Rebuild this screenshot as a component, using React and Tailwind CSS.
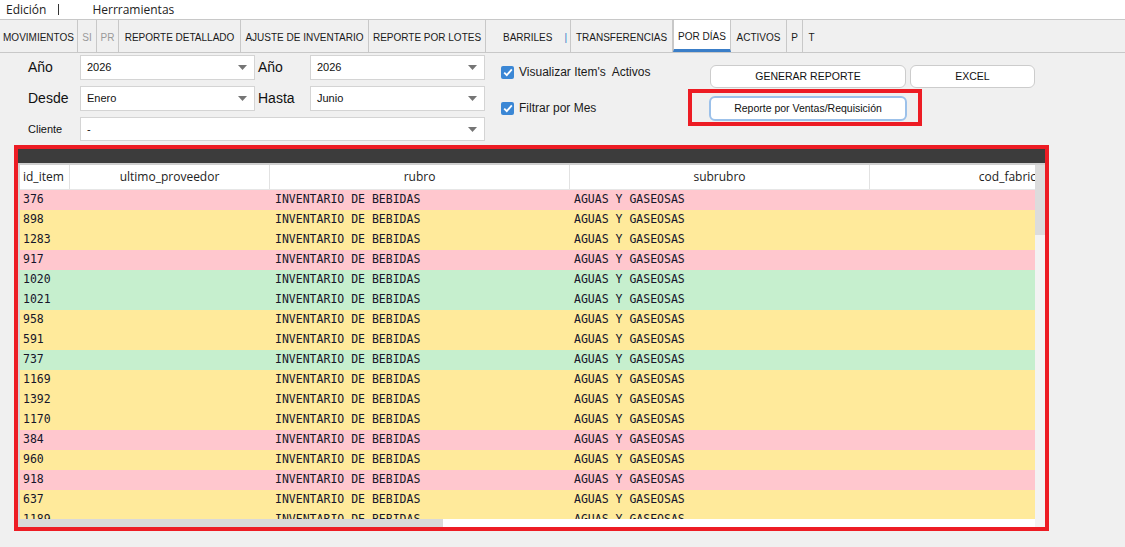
const rows = [
  { id: "376", c: "bg-[#ffc7ce]" },
  { id: "898", c: "bg-[#ffea9b]" },
  { id: "1283", c: "bg-[#ffea9b]" },
  { id: "917", c: "bg-[#ffc7ce]" },
  { id: "1020", c: "bg-[#c6efce]" },
  { id: "1021", c: "bg-[#c6efce]" },
  { id: "958", c: "bg-[#ffea9b]" },
  { id: "591", c: "bg-[#ffea9b]" },
  { id: "737", c: "bg-[#c6efce]" },
  { id: "1169", c: "bg-[#ffea9b]" },
  { id: "1392", c: "bg-[#ffea9b]" },
  { id: "1170", c: "bg-[#ffea9b]" },
  { id: "384", c: "bg-[#ffc7ce]" },
  { id: "960", c: "bg-[#ffea9b]" },
  { id: "918", c: "bg-[#ffc7ce]" },
  { id: "637", c: "bg-[#ffea9b]" },
  { id: "1189", c: "bg-[#ffea9b]" },
];

const tabs = [
  { label: "MOVIMIENTOS", w: "w-[78px]" },
  { label: "SI", w: "w-[19px]", muted: true },
  { label: "PR", w: "w-[22px]", muted: true },
  { label: "REPORTE DETALLADO", w: "w-[122px]" },
  { label: "AJUSTE DE INVENTARIO", w: "w-[128px]" },
  { label: "REPORTE POR LOTES", w: "w-[117px]" },
];

const tabs2 = [
  { label: "TRANSFERENCIAS", w: "w-[102px]" },
  { label: "POR DÍAS", w: "w-[58px]", active: true },
  { label: "ACTIVOS", w: "w-[56px]" },
  { label: "P", w: "w-[16px]" },
];

function Tab({ label, w, muted, active }) {
  return (
    <div
      className={`${w} h-full flex items-center justify-center border-r border-[#c8c8c8] whitespace-nowrap ${
        active ? "bg-white border-l border-b-[3px] border-b-[#3a7ec8] pt-[4px]" : "pt-[2px]"
      } ${muted ? "text-[#9a9a9a]" : "text-[#1a1a1a]"}`}
    >
      {label}
    </div>
  );
}

function Select({ value, w }) {
  return (
    <div className={`${w} h-full bg-white border border-[#d4d4d4] flex items-center justify-between pl-[6px] pr-[7px] text-[11px] text-[#111]`}>
      <span>{value}</span>
      <svg width="9" height="5" viewBox="0 0 9 5">
        <path d="M0 0 L9 0 L4.5 5 Z" fill="#757575" />
      </svg>
    </div>
  );
}

function Check({ label }) {
  return (
    <div className="h-[14px] flex items-center gap-[5px] text-[12px] leading-none text-[#1a1a1a]">
      <div className="w-[13px] h-[13px] rounded-[2px] bg-[#3b87d5] flex items-center justify-center">
        <svg width="10" height="9" viewBox="0 0 10 9">
          <path d="M1.2 4.6 L3.8 7.2 L8.8 1.4" fill="none" stroke="white" strokeWidth="1.8" />
        </svg>
      </div>
      <span className="whitespace-pre">{label}</span>
    </div>
  );
}

export default function App() {
  return (
    <div className="w-[1125px] h-[547px] bg-[#f0f0f0] flex flex-col overflow-hidden font-['Liberation_Sans',sans-serif]">
      {/* Menu */}
      <div className="h-[19px] bg-white flex items-center text-[12px] text-[#222] font-['Open_Sans',sans-serif]">
        <span className="ml-[6px]">Edición</span>
        <span className="ml-[12px] w-px h-[11px] bg-[#333]" />
        <span className="ml-[33px]">Herrramientas</span>
      </div>

      {/* Tabs */}
      <div className="h-[34px] bg-[#f0f0f0] border-y border-[#c8c8c8] flex text-[10px]">
        {tabs.map((t) => (
          <Tab key={t.label} {...t} />
        ))}
        <div className="w-[85px] h-full pt-[2px] flex items-center border-r border-[#c8c8c8] text-[#1a1a1a]">
          <span className="ml-[17px]">BARRILES</span>
          <span className="ml-[12px] text-[#3a7ec8]">|</span>
        </div>
        {tabs2.map((t) => (
          <Tab key={t.label} {...t} />
        ))}
        <div className="w-[17px] h-full pt-[2px] flex items-center justify-center text-[#1a1a1a]">T</div>
      </div>

      {/* Filters */}
      <div className="h-[92px] flex">
        <div className="ml-[28px] pt-[2px] flex flex-col gap-[6px]">
          <div className="h-[25px] flex items-center">
            <span className="w-[52px] text-[14px] text-[#111]">Año</span>
            <Select value="2026" w="w-[175px]" />
            <span className="w-[55px] pl-[3px] text-[14px] text-[#111]">Año</span>
            <Select value="2026" w="w-[175px]" />
          </div>
          <div className="h-[25px] flex items-center">
            <span className="w-[52px] text-[14px] text-[#111]">Desde</span>
            <Select value="Enero" w="w-[175px]" />
            <span className="w-[55px] pl-[3px] text-[14px] text-[#111]">Hasta</span>
            <Select value="Junio" w="w-[175px]" />
          </div>
          <div className="h-[24px] flex items-center">
            <span className="w-[52px] text-[11px] text-[#111]">Cliente</span>
            <Select value="-" w="w-[405px]" />
          </div>
        </div>

        <div className="ml-[16px] w-[187px] pt-[12px] flex flex-col gap-[22px]">
          <Check label="Visualizar Item's  Activos" />
          <Check label="Filtrar por Mes" />
        </div>

        <div className="flex flex-col">
          <div className="ml-[22px] mt-[12px] flex gap-[4px] text-[10.5px] text-[#111]">
            <button className="w-[196px] h-[23px] bg-white border border-[#cccccc] rounded-[6px]">
              GENERAR REPORTE
            </button>
            <button className="w-[125px] h-[23px] bg-white border border-[#cccccc] rounded-[6px]">
              EXCEL
            </button>
          </div>
          <div className="mt-[1px] w-[234px] h-[37px] border-[4px] border-[#ed1c24] pl-[17px] pt-[2px]">
            <button className="w-[198px] h-[25px] bg-white border-2 border-[#9cc1ea] rounded-[6px] text-[10.5px] text-[#111]">
              Reporte por Ventas/Requisición
            </button>
          </div>
        </div>
      </div>

      {/* Table */}
      <div className="ml-[14px] w-[1035px] h-[386px] border-[4px] border-[#ed1c24] flex flex-col bg-[#f0f0f0]">
        <div className="h-[14px] bg-[#3c3c3c]" />
        <div className="h-[2px] bg-[#cfcfcf]" />
        <div className="flex-1 flex min-h-0 border-l-2 border-[#d6d6d6]">
          <div className="w-[1015px] flex flex-col overflow-hidden">
            <div className="h-[25px] flex bg-white text-[12px] text-[#222] font-['Open_Sans',sans-serif] border-b border-[#e6e6e6] whitespace-nowrap">
              <div className="w-[50px] shrink-0 flex items-center pl-[3px] border-r border-[#e2e2e2]">id_item</div>
              <div className="w-[200px] shrink-0 flex items-center justify-center border-r border-[#e2e2e2]">ultimo_proveedor</div>
              <div className="w-[300px] shrink-0 flex items-center justify-center border-r border-[#e2e2e2]">rubro</div>
              <div className="w-[300px] shrink-0 flex items-center justify-center border-r border-[#e2e2e2]">subrubro</div>
              <div className="w-[300px] shrink-0 flex items-center justify-center">cod_fabricante</div>
            </div>
            <div className="flex-1 overflow-hidden font-['DejaVu_Sans_Mono',monospace] text-[11.5px] text-[#15152a]">
              {rows.map((r) => (
                <div key={r.id} className={`h-[20px] flex items-center ${r.c} whitespace-nowrap`}>
                  <div className="w-[250px] shrink-0 pl-[3px]">{r.id}</div>
                  <div className="w-[300px] shrink-0 pl-[5px]">INVENTARIO DE BEBIDAS</div>
                  <div className="w-[300px] shrink-0 pl-[4px]">AGUAS Y GASEOSAS</div>
                </div>
              ))}
            </div>
            <div className="h-[8px] shrink-0 flex bg-white">
              <div className="w-[423px] bg-[#d9d9d9]" />
            </div>
          </div>
          <div className="w-[10px] flex flex-col bg-[#f3f3f3]">
            <div className="h-[70px] bg-[#dcdcdc]" />
          </div>
        </div>
      </div>
    </div>
  );
}
